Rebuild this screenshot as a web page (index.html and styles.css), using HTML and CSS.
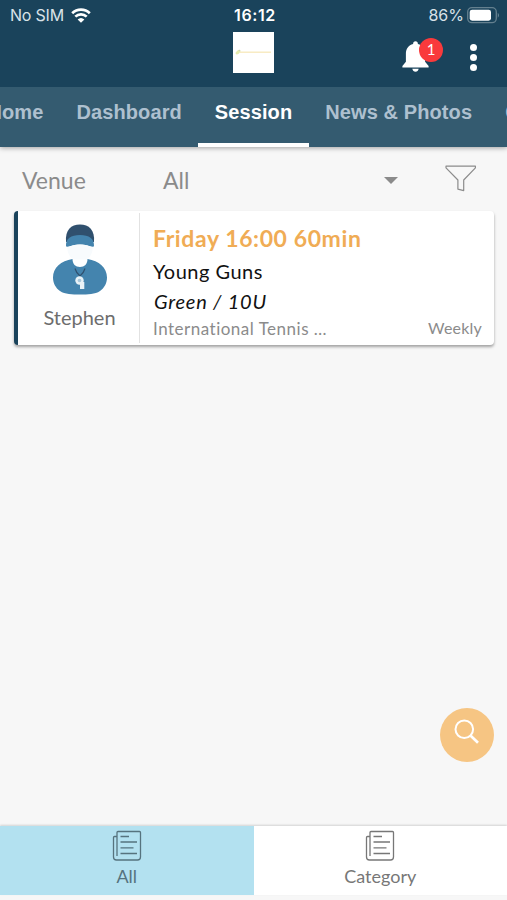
FILE: index.html
```html
<!DOCTYPE html>
<html lang="en">
<head>
  <meta charset="UTF-8">
  <meta name="viewport" content="width=device-width, initial-scale=1.0">
  <title>Session</title>
  <link rel="stylesheet" href="styles.css">
</head>
<body>
  <div class="app">
    <header class="top">
      <div class="status-bar">
        <div class="status-left">
          <span class="carrier">No SIM</span>
          <svg class="wifi" viewBox="0 0 20 15" width="20" height="15">
            <path d="M1.200 5.200a12.600 12.600 0 0 1 17.600 0M4.300 8.600a8.200 8.200 0 0 1 11.400 0" fill="none" stroke="#fff" stroke-width="2.700"/>
            <path d="M6.600 11.500a5 5 0 0 1 6.800 0L10 14.800z" fill="#fff"/>
          </svg>
        </div>
        <span class="clock">16:12</span>
        <div class="status-right">
          <span class="percent">86%</span>
          <svg class="battery" viewBox="0 0 33 17" width="33" height="17">
            <rect x=".7" y=".7" width="28.6" height="15" rx="4.2" fill="none" stroke="#64808f" stroke-width="1.3"/>
            <rect x="2.7" y="2.7" width="21.3" height="11" rx="2.4" fill="#fff"/>
            <path d="M30.8 5.7q2 2.5 0 5z" fill="#7893a3"/>
          </svg>
        </div>
      </div>
      <div class="app-bar">
        <div class="logo">
          <svg viewBox="0 0 41 41" width="41" height="41">
            <path d="M7 20.2h31" stroke="#f7e8ba" stroke-width="1.3"/>
            <ellipse cx="5" cy="20.2" rx="2.9" ry="1.6" transform="rotate(-40 5 20.2)" fill="#e6ebae"/>
            <circle cx="6.5" cy="18.5" r=".8" fill="#cbd3bd"/>
          </svg>
        </div>
        <div class="actions">
          <div class="bell">
            <svg viewBox="0 0 27 31" width="27" height="31">
              <path d="M13.5.3c1.5 0 2.4 1.1 2.4 2.6 4.5 1.2 7.2 4.8 7.2 9.7v8.2l3.5 4.2v1.5H.4V25l3.5-4.2v-8.2c0-4.9 2.7-8.5 7.2-9.7 0-1.5.9-2.6 2.4-2.6z" fill="#fff"/>
              <path d="M10.3 27.8h6.4q-.7 2.9-3.2 2.9t-3.2-2.9z" fill="#fff"/>
            </svg>
            <span class="badge">1</span>
          </div>
          <div class="more"><i></i><i></i><i></i></div>
        </div>
      </div>
      <nav class="tabs">
        <a class="tab">Home</a>
        <a class="tab">Dashboard</a>
        <a class="tab active">Session</a>
        <a class="tab">News &amp; Photos</a>
        <a class="tab">Contact</a>
      </nav>
    </header>

    <main class="content">
      <div class="filter">
        <span class="filter-label">Venue</span>
        <div class="select">
          <span class="select-value">All</span>
          <span class="caret"></span>
        </div>
        <svg class="funnel" viewBox="0 0 32 28" width="32" height="28">
          <path d="M1 1.2h29.4v1.6L18.7 15v10.6l-5.8-1.5V15L1 2.8z" fill="none" stroke="#8c8c8c" stroke-width="1.2" stroke-linejoin="round"/>
        </svg>
      </div>

      <div class="card">
        <div class="coach">
          <svg viewBox="0 0 54 71" width="54" height="71">
            <path d="M13 18C12 6 18 .5 27 .5S42 6 41 18z" fill="#30506e"/>
            <path d="M13 22.500C12.500 14.500 18 11 27 11s14.500 3.500 14 11.500c-4 .8-6-2-14-2s-10 2.800-14 2z" fill="#4484ae"/>
            <path d="M14 23.500q6-3 13-3t13 3q-1 9.500-6.500 12h-13Q15 33 14 23.500z" fill="#f8fbfd"/>
            <path d="M19.500 35C8 37 0 43.500 0 53.500c0 5.500 2.600 10.500 7 13.500 5 3.400 12 3.500 20 3.500s15-.1 20-3.500c4.400-3 7-8 7-13.500C54 43.500 46 37 34.500 35c0 5-3 8-7.500 8s-7.500-3-7.500-8z" fill="#4484ae"/>
            <path d="M22 44.500q1.500 5 5 7.500 3.500-2.500 5-7.500" fill="none" stroke="#30506e" stroke-width="1.200"/>
            <circle cx="26.500" cy="56.500" r="4.200" fill="#e9f2f7"/>
            <circle cx="26.500" cy="56.500" r="1.800" fill="#a9c8db"/>
            <path d="M27 58h4.300v7H27z" fill="#e9f2f7"/>
          </svg>
          <span class="coach-name">Stephen</span>
        </div>
        <div class="info">
          <div class="time">Friday 16:00 60min</div>
          <div class="name">Young Guns</div>
          <div class="level">Green / 10U</div>
          <div class="info-foot">
            <span class="place">International Tennis …</span>
            <span class="repeat">Weekly</span>
          </div>
        </div>
      </div>

      <button class="search">
        <svg viewBox="0 0 26 26" width="26" height="26">
          <circle cx="10.300" cy="10.300" r="8.800" fill="none" stroke="#fff" stroke-width="2"/>
          <path d="M16.700 16.700l7.300 7" stroke="#fff" stroke-width="2.700"/>
        </svg>
      </button>
    </main>

    <footer class="bottom-nav">
      <a class="nav-item selected">
        <svg class="paper" viewBox="0 0 30 32" width="30" height="32">
          <path d="M5 6.500H2.500q-1 0-1 1V27q0 3 3 3h21q3 0 3-3V2.500q0-1-1-1H6q-1 0-1 1V26M8.500 6.500H17M8.500 12H25M8.500 17.800h13M8.500 23.500H25"/>
        </svg>
        <span>All</span>
      </a>
      <a class="nav-item">
        <svg class="paper" viewBox="0 0 30 32" width="30" height="32">
          <path d="M5 6.500H2.500q-1 0-1 1V27q0 3 3 3h21q3 0 3-3V2.500q0-1-1-1H6q-1 0-1 1V26M8.500 6.500H17M8.500 12H25M8.500 17.800h13M8.500 23.500H25"/>
        </svg>
        <span>Category</span>
      </a>
    </footer>
  </div>
</body>
</html>
```
FILE: styles.css
```css
* {
  box-sizing: border-box;
}
body {
  margin: 0;
  background: #f7f7f7;
  font-family: Lato, sans-serif;
}
.app {
  display: flex;
  flex-direction: column;
  height: 900px;
  padding-bottom: 5px;
  overflow: hidden;
}

/* status bar + app bar + tabs */
.top {
  background: #1a435b;
  color: #fff;
  box-shadow: 0 1px 5px rgba(0,0,0,0.35);
}
.status-bar {
  display: grid;
  grid-template-columns: 1fr auto 1fr;
  align-items: center;
  height: 30px;
  padding: 0 7px 0 10px;
  font-family: Inter, sans-serif;
  font-size: 16px;
  line-height: 30px;
}
.status-left,
.status-right {
  display: flex;
  align-items: center;
}
.status-left {
  gap: 7px;
}
.carrier {
  letter-spacing: -0.2px;
}
.status-right {
  justify-content: flex-end;
  gap: 3px;
}
.carrier,
.percent {
  color: #d9e2e8;
}
.clock {
  font-weight: 600;
  letter-spacing: 0.6px;
}
.app-bar {
  display: grid;
  grid-template-columns: 1fr 41px 1fr;
  height: 57px;
  padding-top: 2px;
}
.logo {
  grid-column: 2;
  height: 41px;
  background: #fff;
}
.actions {
  display: flex;
  justify-content: flex-end;
  gap: 41px;
  padding: 9px 30px 0 0;
}
.bell {
  position: relative;
  width: 27px;
  height: 31px;
}
.badge {
  position: absolute;
  left: 17px;
  top: -3px;
  width: 24px;
  height: 24px;
  border-radius: 50%;
  background: #f93a3c;
  font-size: 15px;
  line-height: 23px;
  text-align: center;
}
.more {
  display: flex;
  flex-direction: column;
  gap: 3px;
  padding-top: 3px;
}
.more i {
  width: 7px;
  height: 7px;
  border-radius: 50%;
  background: #fff;
}
.tabs {
  display: flex;
  height: 60px;
  margin-left: -29px;
  background: #345b70;
  overflow: hidden;
}
.tab {
  flex: none;
  height: 60px;
  padding: 0 16.5px;
  border-bottom: 4px solid transparent;
  font-family: "Liberation Sans", Arial, sans-serif;
  font-size: 20px;
  font-weight: bold;
  letter-spacing: 0.1px;
  line-height: 51px;
  color: #aec0cf;
}
.tab.active {
  color: #fff;
  border-bottom-color: #fff;
}

.content {
  display: flex;
  flex-direction: column;
  flex: 1;
}
.filter {
  display: flex;
  align-items: center;
  height: 64px;
  padding: 0 30px 0 22px;
  font-size: 23px;
  line-height: 30px;
  color: #8b8b8b;
}
.filter-label {
  width: 141px;
  padding-top: 2px;
}
.select {
  display: flex;
  align-items: center;
  justify-content: space-between;
  flex: 1;
  padding-top: 2px;
  margin-right: 47px;
}
.caret {
  border: 7px solid transparent;
  border-top-color: #8b8b8b;
  border-bottom: 0;
}

/* session card */
.card {
  display: flex;
  height: 134px;
  margin: 0 13px 0 14px;
  border-left: 4px solid #1a435b;
  border-radius: 4px;
  background: #fff;
  box-shadow: 0 2px 3px rgba(0,0,0,0.35);
}
.coach {
  display: flex;
  flex-direction: column;
  align-items: center;
  width: 122px;
  margin: 2px 0;
  padding: 11px 0 0 2px;
  border-right: 1px solid #e2e2e2;
}
.coach-name {
  margin-top: 9px;
  font-size: 20px;
  line-height: 26px;
  color: #6d6d6d;
}
.info {
  flex: 1;
  padding: 11px 12px 0 13px;
  color: #111;
}
.time {
  font-size: 23px;
  font-weight: bold;
  letter-spacing: 0.6px;
  line-height: 32px;
  color: #f0ac55;
}
.name {
  font-size: 20px;
  letter-spacing: 0.5px;
  line-height: 34px;
}
.level {
  padding-left: 1px;
  font-size: 20px;
  font-style: italic;
  letter-spacing: 0.8px;
  line-height: 26px;
}
.info-foot {
  display: flex;
  justify-content: space-between;
  font-size: 17px;
  line-height: 30px;
  color: #8b8b8b;
}
.place {
  letter-spacing: 0.5px;
}
.repeat {
  font-size: 16px;
  letter-spacing: 0.2px;
  line-height: 28px;
}

/* floating search button */
.search {
  width: 54px;
  height: 54px;
  margin: auto 13px 64px auto;
  padding: 0 0 7px;
  border: 0;
  border-radius: 50%;
  background: #f6c583;
}
.search svg {
  display: block;
  margin: 0 auto;
}

.bottom-nav {
  display: flex;
  height: 69px;
  background: #fff;
  box-shadow: 0 -1px 2px rgba(0,0,0,0.15);
}
.nav-item {
  display: flex;
  flex-direction: column;
  align-items: center;
  flex: 1;
  padding-top: 4px;
  font-size: 18px;
  line-height: 29px;
  color: #777;
}
.nav-item.selected {
  background: #b3e1f0;
  color: #56737e;
}
.paper {
  fill: none;
  stroke: currentColor;
  stroke-width: 1.3;
}
```
